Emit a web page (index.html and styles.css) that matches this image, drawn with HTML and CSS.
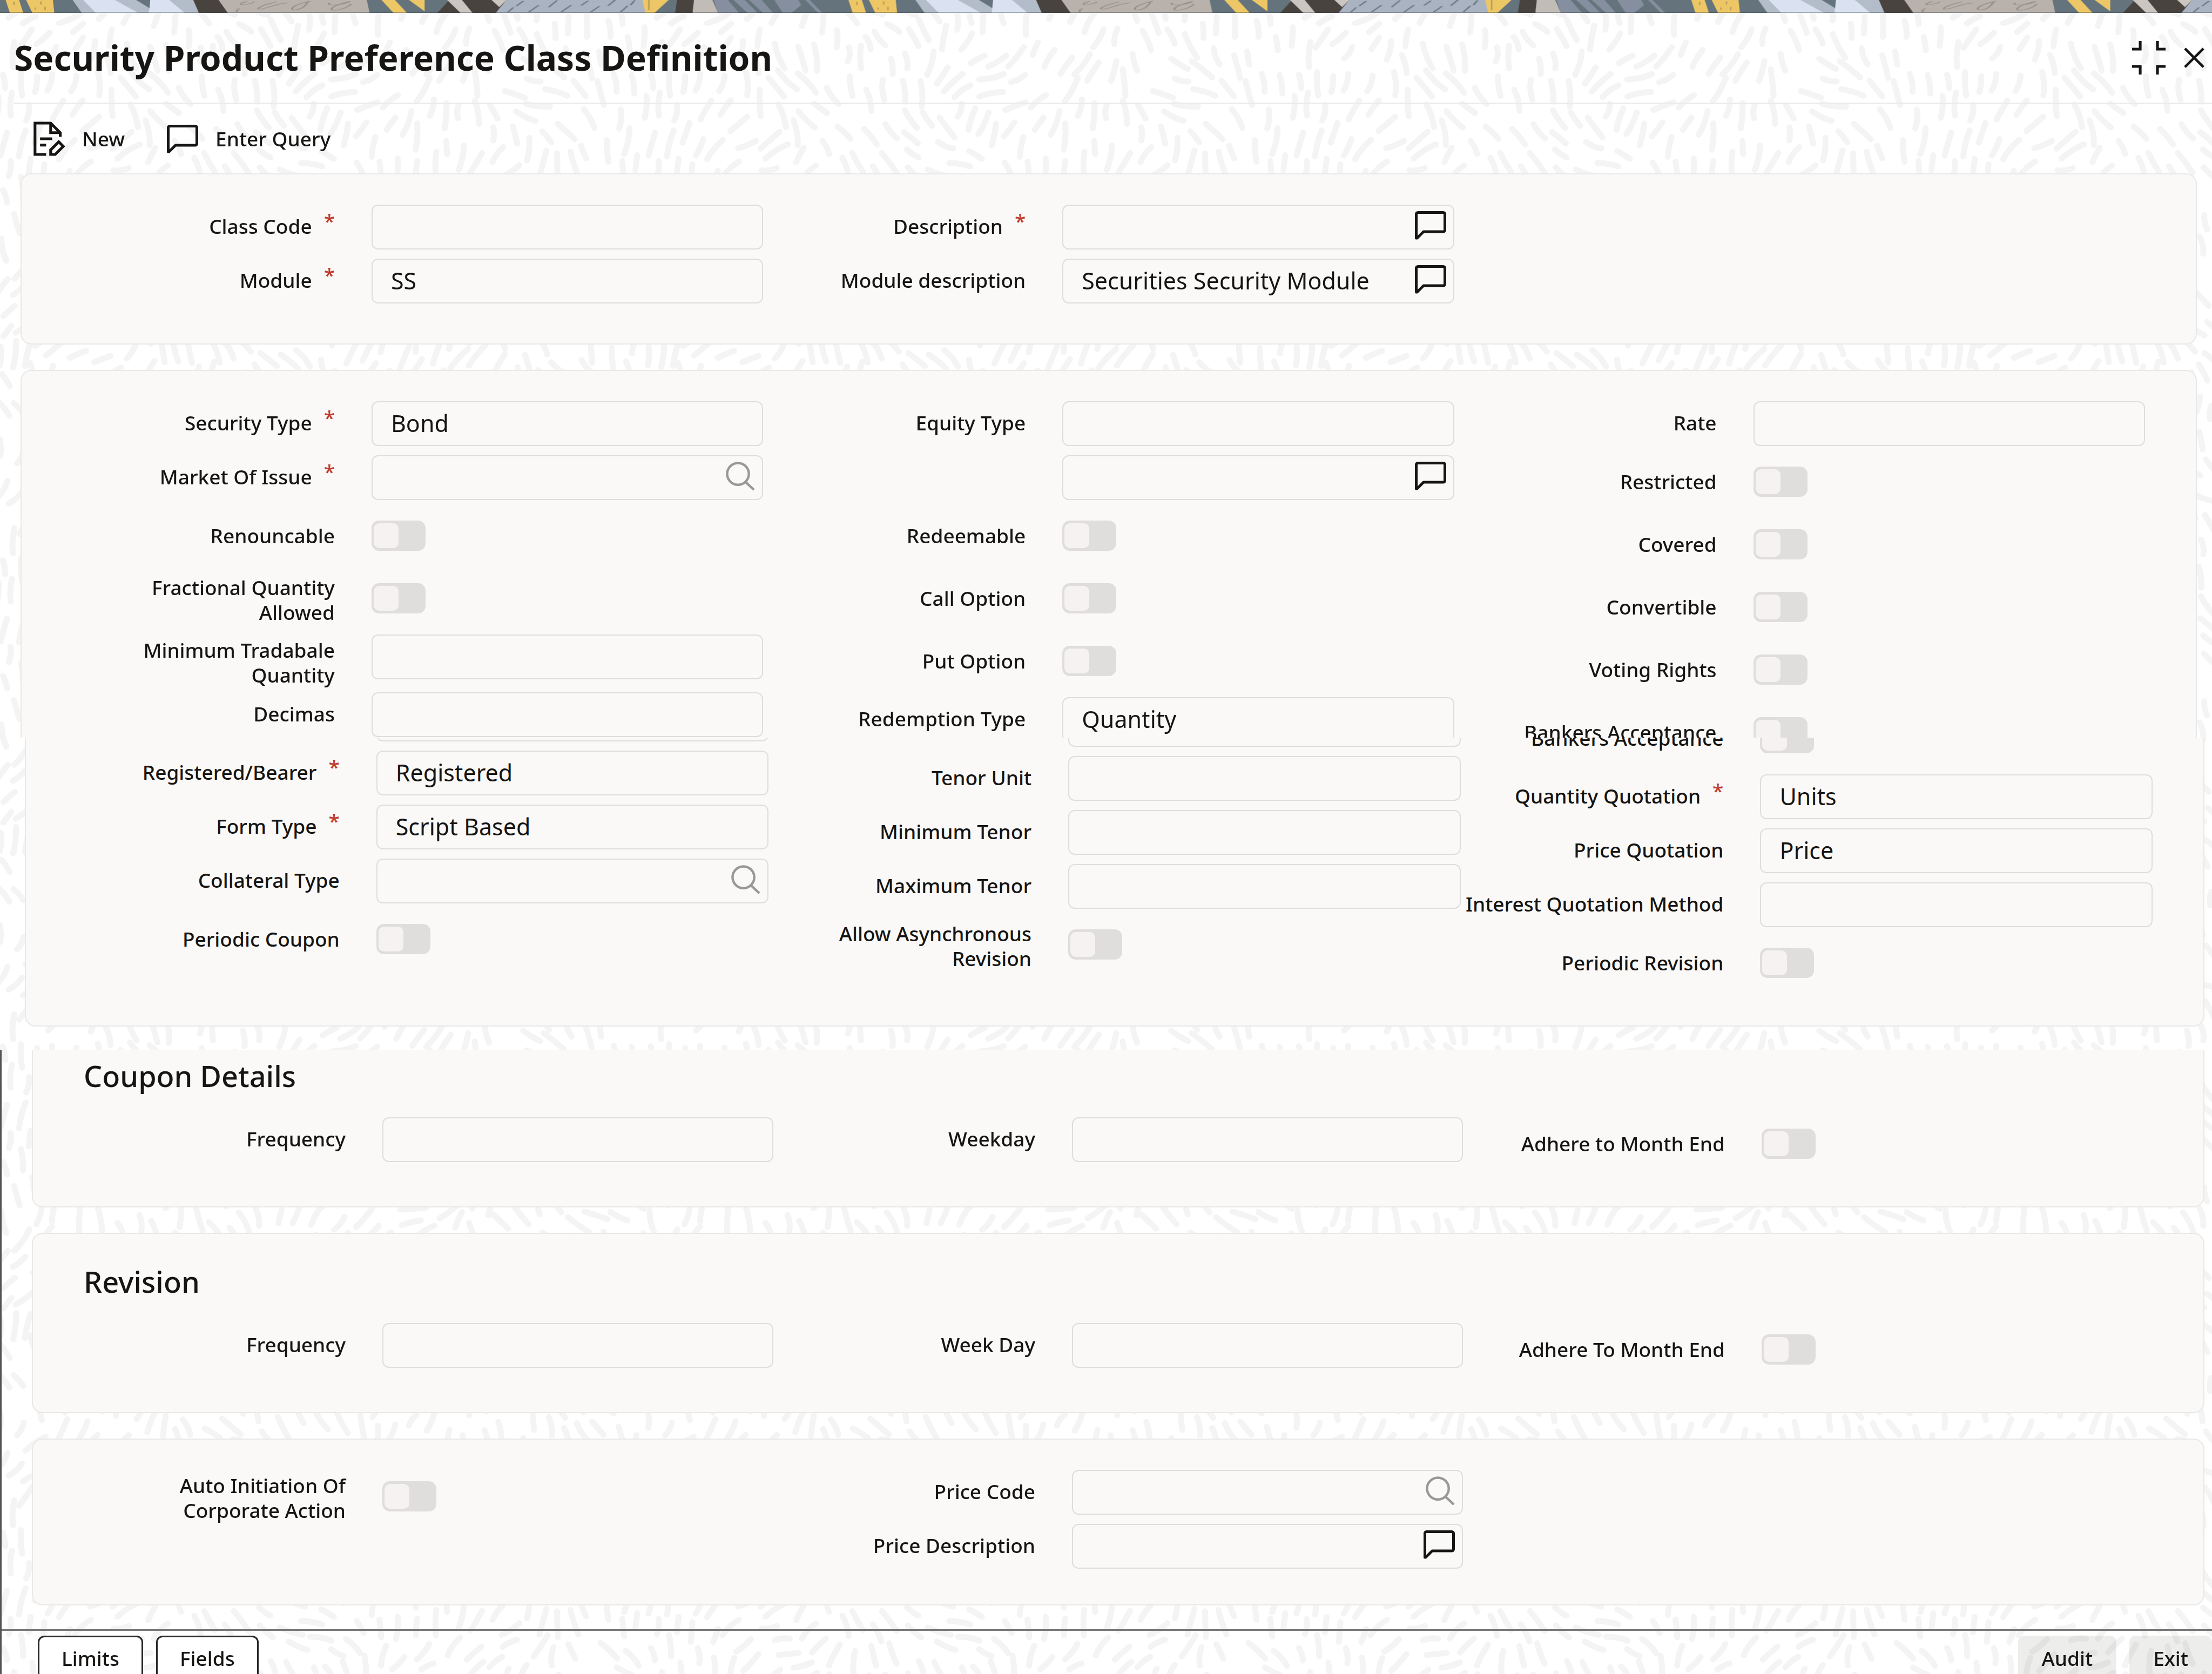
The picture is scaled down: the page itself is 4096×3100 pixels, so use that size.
FILE: index.html
```html
<!DOCTYPE html>
<html lang="en">
<head>
    <meta charset="UTF-8">
    <meta name="viewport" content="width=device-width, initial-scale=1.0">
    <title>Security Product Preference Class Definition</title>
    <link rel="stylesheet" href="styles.css">
</head>
<body>
    <svg class="backdrop" aria-hidden="true">
        <defs>
            <pattern id="strokes" width="1200" height="900" patternUnits="userSpaceOnUse"></pattern>
        </defs>
        <rect width="100%" height="100%" fill="url(#strokes)"/>
    </svg>

    <svg class="sprites" aria-hidden="true">
        <symbol id="icon-chat" viewBox="0 0 58 53">
            <path d="M2.500 50V5.500a3 3 0 0 1 3-3h47a3 3 0 0 1 3 3v29.500a3 3 0 0 1-3 3H16L4 50z" fill="none" stroke="currentColor" stroke-width="5" stroke-linejoin="round"/>
        </symbol>
        <symbol id="icon-search" viewBox="0 0 56 55">
            <circle cx="24" cy="23" r="20.500" fill="none" stroke="currentColor" stroke-width="4.500"/>
            <path d="M38 38l16 15" fill="none" stroke="currentColor" stroke-width="4.500"/>
        </symbol>
        <symbol id="icon-new" viewBox="0 0 62 68">
            <path d="M25 65H3V3H34L53 22v8M34 3V22H53M13 34H37M13 46.500H25" fill="none" stroke="currentColor" stroke-width="5.500"/>
            <path d="M50 40l9 9-16 16H34v-9z" fill="none" stroke="currentColor" stroke-width="5.500"/>
        </symbol>
        <symbol id="icon-collapse" viewBox="0 0 66 66">
            <path d="M16 0V16H0M50 0V16H66M0 50H16V66M66 50H50V66" fill="none" stroke="currentColor" stroke-width="5.500"/>
        </symbol>
        <symbol id="icon-close" viewBox="0 0 40 40">
            <path d="M2 2l36 36M38 2L2 38" fill="none" stroke="currentColor" stroke-width="5"/>
        </symbol>
    </svg>

    <section class="sheet">
        <svg class="banner" aria-hidden="true">
            <defs>
                <pattern id="ribbon" width="1195" height="76" patternUnits="userSpaceOnUse" patternTransform="scale(1.306 .316)">
                    <rect width="1195" height="76" fill="#65747c"/>
                    <path d="M8 0h19l6 76H14zM37 0h38l2 76H46zM541 0h19l17 76h-19zM580 0h22v66z" fill="#edc766"/>
                    <path d="M103 0h172l8 76H116z" fill="#b3bdc9"/>
                    <path d="M118 0h45l33 76h-60zM213 0h27l22 76h-51z" fill="#dae2f1"/>
                    <path d="M193 0h20l-1 48z" fill="#65747c"/>
                    <path d="M274 0h37l12 76h-41zM637 0h81l-15 76h-83zM960 0h24l-2 76h-25z" fill="#48433f"/>
                    <path d="M310 0h210l4 76H323z" fill="#b9b2ac"/>
                    <path d="M634 0h21l15 76h-17zM697 0h21l-10 42z" fill="#cbc6bf"/>
                    <path d="M718 0h195l2 76H703z" fill="#a9b3c2"/>
                    <path d="M911 0h37l-20 76h-13z" fill="#edc766"/>
                    <path d="M984 0h26l8 76h-36z" fill="#c2bcb6"/>
                    <path d="M1012 0h20l16 76h-30zM1040 0h16l18 76h-14zM1062 0h18l16 76h-14zM1098 0h34l4 30-14 46h-12zM1142 0h6l18 76h-6z" fill="#868fa0"/>
                    <path d="M350 8c-24 30 8 20 10 2M392 10c-30 30-30 50-20 42s20-30 36-36M440 6c-30 30-30 56-20 52s16-40 16-48M468 16c-10 20 20 16 28-8-30 30-30 56-20 52s18-20 22-36M340 50c-6 10-4 16-4 20" fill="none" stroke="#96908b" stroke-width="3"/>
                    <path d="M742 6l-10 30M764 30l-14 40M790 2l-12 40M810 30l-14 40M834 4l-10 28M850 36l-12 34M872 0l-10 34M890 34l-10 36M900 2l-6 28M728 44l-8 28" fill="none" stroke="#6f7a88" stroke-width="3"/>
                    <path d="M920 0v60M20 10v20M58 8v18M64 40v20M50 44v12" fill="none" stroke="#b89a58" stroke-width="2"/>
                    <rect y="70" width="1195" height="6" fill="#3c4248" opacity=".35"/>
                </pattern>
            </defs>
            <rect width="100%" height="100%" fill="url(#ribbon)"/>
        </svg>

        <header class="titlebar">
            <h1>Security Product Preference Class Definition</h1>
            <div class="window-actions">
                <button type="button" class="icon-btn" aria-label="Restore"><svg class="i-collapse"><use href="#icon-collapse"/></svg></button>
                <button type="button" class="icon-btn" aria-label="Close"><svg class="i-close"><use href="#icon-close"/></svg></button>
            </div>
        </header>

        <div class="toolbar">
            <button type="button" class="tool"><svg class="i-new"><use href="#icon-new"/></svg>New</button>
            <button type="button" class="tool"><svg class="i-chat"><use href="#icon-chat"/></svg>Enter Query</button>
        </div>

        <div class="panel panel-key">
            <div class="col">
                <div class="field"><label for="classCode">Class Code<span class="req">*</span></label><div class="control"><input type="text" id="classCode"></div></div>
                <div class="field"><label for="module">Module<span class="req">*</span></label><div class="control"><input type="text" id="module" value="SS"></div></div>
            </div>
            <div class="col">
                <div class="field"><label for="description">Description<span class="req">*</span></label><div class="control"><input type="text" id="description"><button type="button" class="icon-btn" aria-label="Expand description"><svg class="i-chat"><use href="#icon-chat"/></svg></button></div></div>
                <div class="field"><label for="moduleDesc">Module description</label><div class="control"><input type="text" id="moduleDesc" value="Securities Security Module"><button type="button" class="icon-btn" aria-label="Expand module description"><svg class="i-chat"><use href="#icon-chat"/></svg></button></div></div>
            </div>
            <div class="col"></div>
        </div>

        <div class="panel">
            <div class="col">
                <div class="field"><label for="securityType">Security Type<span class="req">*</span></label><div class="control"><input type="text" id="securityType" value="Bond"></div></div>
                <div class="field"><label for="market">Market Of Issue<span class="req">*</span></label><div class="control"><input type="text" id="market"><button type="button" class="icon-btn" aria-label="Search market"><svg class="i-search"><use href="#icon-search"/></svg></button></div></div>
                <div class="field toggle"><label for="renouncable">Renouncable</label><input type="checkbox" id="renouncable"></div>
                <div class="field toggle"><label class="wrap" for="fractional">Fractional Quantity Allowed</label><input type="checkbox" id="fractional"></div>
                <div class="field"><label class="wrap" for="minTradable">Minimum Tradabale Quantity</label><div class="control"><input type="text" id="minTradable"></div></div>
                <div class="field"><label for="decimals">Decimas</label><div class="control"><input type="text" id="decimals"></div></div>
            </div>
            <div class="col">
                <div class="field"><label for="equityType">Equity Type</label><div class="control"><input type="text" id="equityType"></div></div>
                <div class="field"><label for="marketDesc"></label><div class="control"><input type="text" id="marketDesc" aria-label="Market description"><button type="button" class="icon-btn" aria-label="Expand market description"><svg class="i-chat"><use href="#icon-chat"/></svg></button></div></div>
                <div class="field toggle"><label for="redeemable">Redeemable</label><input type="checkbox" id="redeemable"></div>
                <div class="field toggle"><label for="callOption">Call Option</label><input type="checkbox" id="callOption"></div>
                <div class="field toggle"><label for="putOption">Put Option</label><input type="checkbox" id="putOption"></div>
                <div class="field"><label for="redemptionType">Redemption Type</label><div class="control"><input type="text" id="redemptionType" value="Quantity"></div></div>
            </div>
            <div class="col">
                <div class="field"><label for="rate">Rate</label><div class="control"><input type="text" id="rate"></div></div>
                <div class="field toggle"><label for="restricted">Restricted</label><input type="checkbox" id="restricted"></div>
                <div class="field toggle"><label for="covered">Covered</label><input type="checkbox" id="covered"></div>
                <div class="field toggle"><label for="convertible">Convertible</label><input type="checkbox" id="convertible"></div>
                <div class="field toggle"><label for="votingRights">Voting Rights</label><input type="checkbox" id="votingRights"></div>
                <div class="field toggle"><label for="bankers">Bankers Acceptance</label><input type="checkbox" id="bankers"></div>
            </div>
        </div>
    </section>

    <section class="sheet sheet-middle">
        <div class="panel panel-scrolled">
            <div class="col">
                <div class="field"><label for="decimals2"></label><div class="control"><input type="text" id="decimals2" aria-label="Decimals"></div></div>
                <div class="field"><label for="registered">Registered/Bearer<span class="req">*</span></label><div class="control"><input type="text" id="registered" value="Registered"></div></div>
                <div class="field"><label for="formType">Form Type<span class="req">*</span></label><div class="control"><input type="text" id="formType" value="Script Based"></div></div>
                <div class="field"><label for="collateral">Collateral Type</label><div class="control"><input type="text" id="collateral"><button type="button" class="icon-btn" aria-label="Search collateral type"><svg class="i-search"><use href="#icon-search"/></svg></button></div></div>
                <div class="field toggle"><label for="periodicCoupon">Periodic Coupon</label><input type="checkbox" id="periodicCoupon"></div>
            </div>
            <div class="col col-second">
                <div class="field"><label for="redemption2"></label><div class="control"><input type="text" id="redemption2" aria-label="Redemption type"></div></div>
                <div class="field"><label for="tenorUnit">Tenor Unit</label><div class="control"><input type="text" id="tenorUnit"></div></div>
                <div class="field"><label for="minTenor">Minimum Tenor</label><div class="control"><input type="text" id="minTenor"></div></div>
                <div class="field"><label for="maxTenor">Maximum Tenor</label><div class="control"><input type="text" id="maxTenor"></div></div>
                <div class="field toggle"><label class="wrap" for="asyncRevision">Allow Asynchronous Revision</label><input type="checkbox" id="asyncRevision"></div>
            </div>
            <div class="col col-third">
                <div class="field toggle"><label for="bankers2">Bankers Acceptance</label><input type="checkbox" id="bankers2"></div>
                <div class="field"><label for="qtyQuotation">Quantity Quotation<span class="req">*</span></label><div class="control"><input type="text" id="qtyQuotation" value="Units"></div></div>
                <div class="field"><label for="priceQuotation">Price Quotation</label><div class="control"><input type="text" id="priceQuotation" value="Price"></div></div>
                <div class="field"><label for="interestMethod">Interest Quotation Method</label><div class="control"><input type="text" id="interestMethod"></div></div>
                <div class="field toggle"><label for="periodicRevision">Periodic Revision</label><input type="checkbox" id="periodicRevision"></div>
            </div>
        </div>
    </section>

    <section class="sheet sheet-last">
        <div class="panel panel-open">
            <h2>Coupon Details</h2>
            <div class="col">
                <div class="field"><label for="couponFreq">Frequency</label><div class="control"><input type="text" id="couponFreq"></div></div>
            </div>
            <div class="col">
                <div class="field"><label for="couponDay">Weekday</label><div class="control"><input type="text" id="couponDay"></div></div>
            </div>
            <div class="col">
                <div class="field toggle"><label for="couponEnd">Adhere to Month End</label><input type="checkbox" id="couponEnd"></div>
            </div>
        </div>

        <div class="panel">
            <h2>Revision</h2>
            <div class="col">
                <div class="field"><label for="revFreq">Frequency</label><div class="control"><input type="text" id="revFreq"></div></div>
            </div>
            <div class="col">
                <div class="field"><label for="revDay">Week Day</label><div class="control"><input type="text" id="revDay"></div></div>
            </div>
            <div class="col">
                <div class="field toggle"><label for="revEnd">Adhere To Month End</label><input type="checkbox" id="revEnd"></div>
            </div>
        </div>

        <div class="panel">
            <div class="col">
                <div class="field toggle"><label class="wrap" for="autoInit">Auto Initiation Of Corporate Action</label><input type="checkbox" id="autoInit"></div>
            </div>
            <div class="col">
                <div class="field"><label for="priceCode">Price Code</label><div class="control"><input type="text" id="priceCode"><button type="button" class="icon-btn" aria-label="Search price code"><svg class="i-search"><use href="#icon-search"/></svg></button></div></div>
                <div class="field"><label for="priceDesc">Price Description</label><div class="control"><input type="text" id="priceDesc"><button type="button" class="icon-btn" aria-label="Expand price description"><svg class="i-chat"><use href="#icon-chat"/></svg></button></div></div>
            </div>
            <div class="col"></div>
        </div>

        <footer class="footer">
            <div class="footer-group">
                <button type="button" class="btn">Limits</button>
                <button type="button" class="btn">Fields</button>
            </div>
            <div class="footer-group">
                <button type="button" class="btn btn-grey">Audit</button>
                <button type="button" class="btn btn-grey">Exit</button>
            </div>
        </footer>
    </section>

    <script src="backdrop.js"></script>
</body>
</html>
```
FILE: backdrop.js
```js
// Fills the backdrop tile with short brush strokes that follow a wavy field
const tile = document.getElementById('strokes');
const W = 1200;
const H = 900;
let seed = 7;

function rand() {
    seed = (seed * 16807) % 2147483647;
    return seed / 2147483647;
}

function angleAt(x, y) {
    const u = x / W * Math.PI * 2;
    const v = y / H * Math.PI * 2;
    return 1.57 + 0.7 * Math.sin(2 * u + Math.sin(2 * v)) + 0.5 * Math.sin(3 * v + 2 * Math.cos(u)) + 0.3 * Math.sin(5 * u - 2 * v);
}

const placed = [];
for (let i = 0; i < 14000; i++) {
    const x = rand() * W;
    const y = rand() * H;
    const a = angleAt(x, y);
    const c = Math.cos(a);
    const s = Math.sin(a);
    const clear = placed.every(p => {
        const dx = Math.abs(x - p.x) > W / 2 ? x - p.x - Math.sign(x - p.x) * W : x - p.x;
        const dy = Math.abs(y - p.y) > H / 2 ? y - p.y - Math.sign(y - p.y) * H : y - p.y;
        const along = (dx * c + dy * s) / 56;
        const across = (dy * c - dx * s) / 23;
        return along * along + across * across > 1;
    });
    if (clear) placed.push({ x, y, c, s, len: 12 + rand() * 13, bend: (rand() - 0.5) * 10 });
}

let d = '';
for (const p of placed) {
    for (const ox of [-W, 0, W]) {
        for (const oy of [-H, 0, H]) {
            const x = p.x + ox;
            const y = p.y + oy;
            if (x < -40 || x > W + 40 || y < -40 || y > H + 40) continue;
            const f = n => n.toFixed(1);
            d += `M${f(x - p.c * p.len)} ${f(y - p.s * p.len)}Q${f(x - p.s * p.bend)} ${f(y + p.c * p.bend)} ${f(x + p.c * p.len)} ${f(y + p.s * p.len)}`;
        }
    }
}
const path = document.createElementNS('http://www.w3.org/2000/svg', 'path');
path.setAttribute('d', d);
path.setAttribute('class', 'stroke');
tile.appendChild(path);
```
FILE: styles.css
```css
* {
    box-sizing: border-box;
}
body {
    margin: 0;
    height: 100vh;
    display: grid;
    grid-template-rows: 1366fr 578fr 1156fr;
    overflow: hidden;
    background: #fff;
    color: #161513;
    font-family: "Noto Sans", "Open Sans", sans-serif;
    font-size: 37px;
    font-weight: 500;
    line-height: 46px;
}
button, input {
    font: inherit;
    color: inherit;
}
button {
    padding: 0;
    border: none;
    background: none;
    cursor: pointer;
}
svg {
    display: block;
}
.backdrop {
    position: fixed;
    inset: 0;
    width: 100%;
    height: 100%;
    z-index: -1;
}
.stroke {
    fill: none;
    stroke: #f4f4f4;
    stroke-width: 11px;
    stroke-linecap: round;
}
.sprites {
    position: absolute;
    width: 0;
    height: 0;
}

/* The form is shown in three strips, each cut off at its own edge */
.sheet {
    min-height: 0;
    overflow: hidden;
    padding: 0 28px 0 38px;
}
.sheet-middle {
    padding: 0 14px 0 46px;
}
.sheet-last {
    padding: 0 14px 0 56px;
    border-left: 3px solid #55534f;
}

.banner {
    width: calc(100% + 66px);
    height: 24px;
    margin: 0 -28px 0 -38px;
}
.titlebar {
    display: flex;
    justify-content: space-between;
    align-items: center;
    height: 169px;
    margin: 0 -28px 0 -12px;
    padding-right: 14px;
    border-bottom: 3px solid #ebebea;
}
h1 {
    margin: 0;
    font-size: 64px;
    font-weight: 700;
    line-height: 80px;
}
.window-actions {
    display: flex;
    align-items: center;
    gap: 34px;
}
.toolbar {
    display: flex;
    align-items: center;
    gap: 78px;
    height: 128px;
    padding-left: 24px;
}
.tool {
    display: flex;
    align-items: center;
    gap: 32px;
}

.panel {
    display: grid;
    grid-template-columns: repeat(3, 1fr);
    margin-bottom: 47px;
    padding: 56px 94px 49px;
    border: 2px solid #e9e8e6;
    border-radius: 20px;
    background: #fbf9f8;
}
.panel-key {
    padding-bottom: 57px;
}
.panel-scrolled {
    margin-top: -96px;
    padding-top: 18px;
}
.panel-open {
    padding-top: 16px;
    border-top: none;
    border-top-left-radius: 0;
    border-top-right-radius: 0;
}
.col-second {
    padding-top: 10px;
}
.col-third {
    padding-top: 28px;
}
h2 {
    grid-column: 1 / -1;
    margin: 0 0 45px;
    font-size: 54px;
    font-weight: 500;
    line-height: 64px;
}

.field {
    display: grid;
    grid-template-columns: 485fr 724fr;
    column-gap: 68px;
    align-items: start;
    margin-bottom: 17px;
}
.field label {
    padding-top: 17px;
    text-align: right;
    white-space: nowrap;
}
.field .wrap {
    padding: 6px 0 0 80px;
    margin-bottom: -8px;
    white-space: normal;
}
.req {
    margin-left: 22px;
    color: #c0392b;
    line-height: 0;
    vertical-align: 10px;
}
.control {
    position: relative;
}
input[type="text"] {
    display: block;
    width: 100%;
    height: 83px;
    padding: 0 34px 2px;
    border: 2px solid #dfdddb;
    border-radius: 12px;
    background: transparent;
    font-size: 43px;
    font-weight: 400;
}
.control .icon-btn {
    position: absolute;
    top: 12px;
    right: 15px;
}

.toggle {
    height: 99px;
    padding-top: 21px;
}
.toggle label {
    padding-top: 5px;
}
.toggle .wrap {
    padding-top: 0;
    margin-top: -15px;
}
input[type="checkbox"] {
    appearance: none;
    width: 100px;
    height: 56px;
    margin: 0;
    padding: 5px 4px;
    border-radius: 14px;
    background: #dfdedc;
}
input[type="checkbox"]::before {
    content: "";
    display: block;
    width: 46px;
    height: 46px;
    border-radius: 10px;
    background: #f5f2f1;
}
input[type="checkbox"]:checked::before {
    margin-left: auto;
}

.i-chat {
    width: 58px;
    height: 53px;
}
.i-search {
    width: 55px;
    height: 54px;
    color: #9a9896;
}
.i-new {
    width: 58px;
    height: 64px;
}
.i-collapse {
    width: 62px;
    height: 62px;
}
.i-close {
    width: 38px;
    height: 38px;
}

.footer {
    display: flex;
    justify-content: space-between;
    margin: -3px -14px 0 -56px;
    padding: 9px 0 0 67px;
    border-top: 3px solid #777;
}
.footer-group {
    display: flex;
    gap: 24px;
}
.btn {
    height: 84px;
    padding: 0 41px;
    border: 3px solid #2a2927;
    border-radius: 12px;
    background: #fff;
}
.btn-grey {
    border-color: transparent;
    background: rgba(22, 21, 19, 0.08);
}
```
